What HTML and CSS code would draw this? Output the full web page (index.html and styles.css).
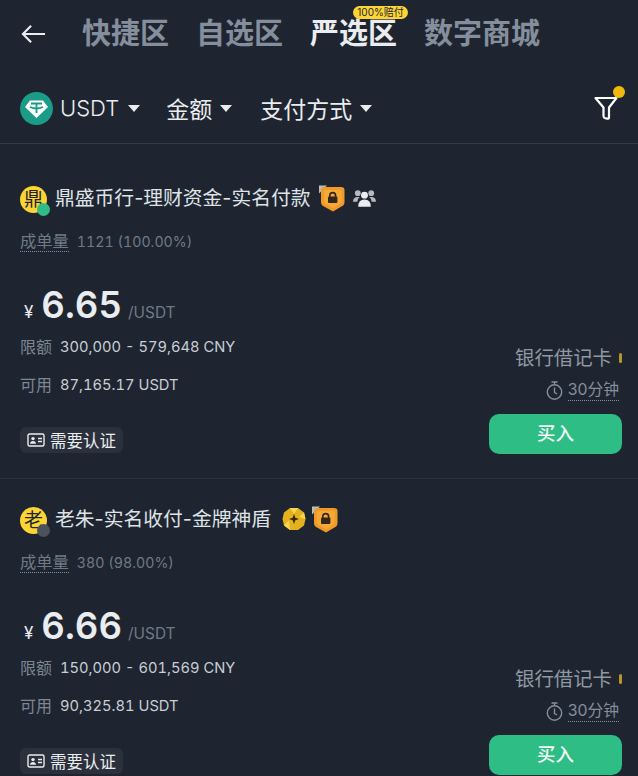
FILE: index.html
```html
<!DOCTYPE html>
<html lang="zh">
<head>
    <meta charset="UTF-8">
    <meta name="viewport" content="width=device-width, initial-scale=1.0">
    <title>严选区</title>
    <link rel="stylesheet" href="styles.css">
</head>
<body>
    <!-- Shared icons -->
    <svg class="icon-defs" aria-hidden="true">
        <symbol id="shield" viewBox="0 0 26 27">
            <path d="M0 0.5 H8 L0 8.5 Z" fill="#b9bdc3"/>
            <path d="M2 5 Q2 2 5 2 L22 2 Q25.5 2 25.5 5 L25.5 17 Q25.5 20 22.5 21.5 L14 26.5 L5 21.5 Q2 20 2 17 Z" fill="#f09a28"/>
            <path d="M5 6 Q5 5 6 5 L21.5 5 Q22.5 5 22.5 6 L22.5 16.5 Q22.5 18 21 19 L14 23 L7 19 Q5 18 5 16.5 Z" fill="#f7a938"/>
            <path d="M10.8 12 V10.5 a2.9 2.9 0 0 1 5.8 0 V12" fill="none" stroke="#33261a" stroke-width="1.6"/>
            <rect x="9" y="11.5" width="9.4" height="6.5" rx="1" fill="#33261a"/>
        </symbol>
        <symbol id="id-card" viewBox="0 0 18 14">
            <rect x="1" y="1" width="16" height="12" rx="1.5" fill="none" stroke="#eaecef" stroke-width="1.4"/>
            <circle cx="6" cy="5.6" r="1.7" fill="#eaecef"/>
            <path d="M3 10.8 Q3.4 8 6 8 Q8.6 8 9 10.8 Z" fill="#eaecef"/>
            <path d="M11 5.5 H15 M11 8.5 H15" stroke="#eaecef" stroke-width="1.3"/>
        </symbol>
        <symbol id="clock" viewBox="0 0 17 19">
            <path d="M5.5 1 H11.5 M8.5 1 V3.5" stroke="#848e9c" stroke-width="1.4" fill="none"/>
            <circle cx="8.5" cy="11" r="7.2" stroke="#848e9c" stroke-width="1.4" fill="none"/>
            <path d="M8.5 6.5 V11.5 L11.2 13" stroke="#848e9c" stroke-width="1.4" fill="none"/>
        </symbol>
    </svg>

    <header class="tabs">
        <svg class="back-icon" viewBox="0 0 26 20" aria-hidden="true">
            <path d="M25 10 H2 M10.5 1.5 L2 10 L10.5 18.5" fill="none" stroke="#eaecef" stroke-width="2.2"/>
        </svg>
        <nav class="tab-list">
            <span class="tab">快捷区</span>
            <span class="tab">自选区</span>
            <span class="tab tab-active">严选区<em class="tab-badge">100%赔付</em></span>
            <span class="tab">数字商城</span>
        </nav>
    </header>

    <section class="filters">
        <svg class="coin-icon" viewBox="0 0 33 33" aria-hidden="true">
            <circle cx="16.5" cy="16.5" r="16.5" fill="#1a9c88"/>
            <path d="M10 8.5 H23 L28 15 L16.5 26 L5 15 Z" fill="#fff"/>
            <path d="M11 11.5 H22 M16.5 11.5 V21 M10 15 Q16.5 18 23 15" fill="none" stroke="#1a9c88" stroke-width="1.8"/>
        </svg>
        <span class="filter-item filter-coin">USDT<i class="caret"></i></span>
        <span class="filter-item">金额<i class="caret"></i></span>
        <span class="filter-item">支付方式<i class="caret"></i></span>
        <span class="filter-btn">
            <svg viewBox="0 0 24 24" aria-hidden="true">
                <path d="M1.5 2 H22.5 L15 11.5 V21.5 Q15 23 13 22.6 L10.8 22 Q9.5 21.6 9.5 20 V11.5 Z" fill="none" stroke="#fff" stroke-width="2.2" stroke-linejoin="round"/>
            </svg>
            <i class="filter-dot"></i>
        </span>
    </section>

    <main class="ad-list">
        <article class="ad">
            <div class="ad-title">
                <span class="avatar">鼎<i class="status status-on"></i></span>
                <span class="ad-name">鼎盛币行-理财资金-实名付款</span>
                <svg class="badge-icon" aria-hidden="true"><use href="#shield"/></svg>
                <svg class="group-icon" viewBox="0 0 24 20" aria-hidden="true">
                    <circle cx="5" cy="5" r="3" fill="#b4b9c0"/>
                    <circle cx="19" cy="5" r="3" fill="#b4b9c0"/>
                    <path d="M0 14 Q0 9 5 9 L7 9 Q4.5 11 4.5 14 Z M24 14 Q24 9 19 9 L17 9 Q19.5 11 19.5 14 Z" fill="#b4b9c0"/>
                    <circle cx="12" cy="7" r="3.6" fill="#eaecef"/>
                    <path d="M5.5 19 Q5.5 11.5 12 11.5 Q18.5 11.5 18.5 19 Z" fill="#eaecef"/>
                </svg>
            </div>
            <div class="ad-stats"><span class="dotted">成单量</span><span class="stats-value">1121 (100.00%)</span></div>
            <div class="ad-body">
                <div class="ad-left">
                    <div class="price"><span class="price-unit">¥</span><strong class="price-value">6.65</strong><span class="price-per">/USDT</span></div>
                    <div class="info-row"><span class="info-label">限额</span><span class="info-value">300,000 - 579,648 CNY</span></div>
                    <div class="info-row info-row-second"><span class="info-label">可用</span><span class="info-value">87,165.17 USDT</span></div>
                    <span class="tag"><svg aria-hidden="true"><use href="#id-card"/></svg>需要认证</span>
                </div>
                <div class="ad-right">
                    <div class="pay-method">银行借记卡<i class="pay-mark"></i></div>
                    <div class="pay-time"><svg aria-hidden="true"><use href="#clock"/></svg><span class="dotted">30分钟</span></div>
                    <button class="buy-btn" type="button">买入</button>
                </div>
            </div>
        </article>

        <article class="ad">
            <div class="ad-title">
                <span class="avatar">老<i class="status status-off"></i></span>
                <span class="ad-name">老朱-实名收付-金牌神盾</span>
                <svg class="medal-icon" viewBox="0 0 24 24" aria-hidden="true">
                    <path d="M8 1 L16 1 L22 5.5 L23.5 12 L22 18.5 L16 23 L8 23 L2 18.5 L0.5 12 L2 5.5 Z" fill="#e3b21c"/>
                    <path d="M8 1 L16 1 L12 7 Z M2 18.5 L7 13 L8 23 Z M22 5.5 L23.5 12 L17 10 Z" fill="#f5d555"/>
                    <path d="M12 7 L13.3 10.7 L17 12 L13.3 13.3 L12 17 L10.7 13.3 L7 12 L10.7 10.7 Z" fill="#33290c"/>
                </svg>
                <svg class="badge-icon" aria-hidden="true"><use href="#shield"/></svg>
            </div>
            <div class="ad-stats"><span class="dotted">成单量</span><span class="stats-value">380 (98.00%)</span></div>
            <div class="ad-body">
                <div class="ad-left">
                    <div class="price"><span class="price-unit">¥</span><strong class="price-value">6.66</strong><span class="price-per">/USDT</span></div>
                    <div class="info-row"><span class="info-label">限额</span><span class="info-value">150,000 - 601,569 CNY</span></div>
                    <div class="info-row info-row-second"><span class="info-label">可用</span><span class="info-value">90,325.81 USDT</span></div>
                    <span class="tag"><svg aria-hidden="true"><use href="#id-card"/></svg>需要认证</span>
                </div>
                <div class="ad-right">
                    <div class="pay-method">银行借记卡<i class="pay-mark"></i></div>
                    <div class="pay-time"><svg aria-hidden="true"><use href="#clock"/></svg><span class="dotted">30分钟</span></div>
                    <button class="buy-btn" type="button">买入</button>
                </div>
            </div>
        </article>
    </main>
</body>
</html>
```
FILE: styles.css
```css
/* Page base */
html, body {
    height: 776px;
    overflow: hidden;
}

body {
    margin: 0;
    background-color: #1e2530;
    color: #eaecef;
    font-family: Inter, "Noto Sans CJK SC", sans-serif;
}

.icon-defs {
    display: none;
}

i, em {
    font-style: normal;
}

/* Top tabs */
.tabs {
    display: flex;
    align-items: center;
    height: 68px;
    padding-left: 21px;
    padding-bottom: 2px;
}

.back-icon {
    width: 25px;
    height: 20px;
}

.tab-list {
    display: flex;
    gap: 27px;
    margin-left: 36px;
}

.tab {
    position: relative;
    color: #848e9c;
    font-size: 29px;
    font-weight: 600;
    line-height: 28px;
}

.tab-active {
    color: #eaecef;
}

.tab-badge {
    position: absolute;
    top: -14px;
    left: 43px;
    width: 55px;
    height: 13px;
    border-radius: 7px;
    background-color: #fcd535;
    color: #1e2530;
    font-size: 10px;
    font-weight: 400;
    line-height: 13px;
    text-align: center;
    white-space: nowrap;
}

/* Filter bar */
.filters {
    display: flex;
    align-items: center;
    height: 70px;
    padding: 3px 20px 0;
    border-bottom: 1px solid #343b46;
}

.coin-icon {
    width: 33px;
    height: 33px;
    margin-right: 7px;
}

.filter-item {
    display: flex;
    align-items: center;
    margin-right: 28px;
    color: #eaecef;
    font-size: 23px;
}

.filter-coin {
    margin-right: 26px;
    font-size: 22px;
    font-weight: 300;
}

.caret {
    width: 0;
    height: 0;
    margin-left: 8px;
    border-top: 7px solid #eaecef;
    border-left: 6px solid transparent;
    border-right: 6px solid transparent;
}

.filter-coin .caret {
    margin-left: 9px;
}

.filter-btn {
    position: relative;
    width: 24px;
    height: 24px;
    margin-left: auto;
}

.filter-btn svg {
    display: block;
    width: 24px;
    height: 24px;
}

.filter-dot {
    position: absolute;
    top: -10px;
    right: -7px;
    width: 12px;
    height: 12px;
    border-radius: 50%;
    background-color: #f0b90b;
}

/* Ad list */
.ad-list {
    padding-top: 13px;
}

.ad {
    padding: 26px 16px 24px 20px;
    border-bottom: 1px solid #2c333e;
}

.ad + .ad {
    padding-top: 25px;
}

.ad-title {
    display: flex;
    align-items: center;
    height: 30px;
}

.avatar {
    position: relative;
    flex: none;
    width: 27px;
    height: 27px;
    margin-top: 2px;
    border-radius: 50%;
    background-color: #fcd535;
    color: #1e2530;
    font-size: 19px;
    line-height: 27px;
    text-align: center;
}

.status {
    position: absolute;
    right: -3px;
    bottom: -3px;
    width: 13px;
    height: 13px;
    border-radius: 50%;
}

.status-on {
    background-color: #2ebd85;
}

.status-off {
    background-color: #4c525c;
}

.ad-name {
    margin-left: 8px;
    font-size: 19.8px;
    line-height: 30px;
    color: #dfe2e6;
}

.badge-icon {
    width: 26px;
    height: 27px;
    margin-left: 8px;
}

.group-icon {
    width: 23px;
    height: 20px;
    margin-left: 8px;
}

.medal-icon {
    width: 24px;
    height: 24px;
    margin-left: 11px;
}

.medal-icon + .badge-icon {
    margin-left: 6px;
}

.ad-stats {
    display: flex;
    align-items: center;
    gap: 8px;
    height: 20px;
    margin-top: 18px;
    color: #6f7a87;
    font-size: 16.3px;
}

.stats-value {
    font-size: 14.2px;
    font-variant-numeric: tabular-nums;
}

.dotted {
    border-bottom: 1px dotted #848e9c;
    line-height: 20px;
}

/* Price and limits */
.ad-body {
    display: flex;
    justify-content: space-between;
    align-items: flex-end;
    margin-top: 35px;
}

.ad-left {
    padding-bottom: 1px;
}

.price {
    display: flex;
    align-items: baseline;
    height: 40px;
    line-height: 38px;
}

.price-unit {
    margin-left: 4px;
    font-size: 17px;
}

.price-value {
    margin-left: 8px;
    font-size: 36.5px;
    font-weight: 600;
    font-variant-numeric: tabular-nums;
}

.price-per {
    margin-left: 6px;
    color: #6f7a87;
    font-size: 15.4px;
}

.info-row {
    display: flex;
    align-items: center;
    gap: 8px;
    height: 20px;
    margin-top: 11px;
}

.info-row-second {
    margin-top: 18px;
}

.info-label {
    color: #7d8794;
    font-size: 16px;
    line-height: 18px;
}

.info-value {
    color: #c9ced5;
    font-size: 14.7px;
    font-variant-numeric: tabular-nums;
}

.tag {
    display: inline-flex;
    align-items: center;
    gap: 5px;
    height: 26px;
    margin-top: 32px;
    padding: 0 7px;
    border-radius: 6px;
    background-color: #2a313c;
    color: #eaecef;
    font-size: 16.5px;
    vertical-align: top;
}

.tag svg {
    width: 18px;
    height: 14px;
}

/* Payment and buy button */
.ad-right {
    display: flex;
    flex-direction: column;
    align-items: flex-end;
    width: 133px;
}

.pay-method {
    display: flex;
    align-items: center;
    color: #8f98a3;
    font-size: 19.4px;
    line-height: 26px;
    white-space: nowrap;
}

.pay-mark {
    width: 3px;
    height: 10px;
    margin-left: 7px;
    border-radius: 2px;
    background-color: #b8962a;
}

.pay-time {
    display: flex;
    align-items: center;
    gap: 5px;
    margin-top: 9px;
    margin-right: 3px;
    color: #848e9c;
    font-size: 15.8px;
}

.pay-time svg {
    width: 17px;
    height: 19px;
}

.buy-btn {
    width: 133px;
    height: 40px;
    margin-top: 13px;
    padding: 0 0 5px;
    border: none;
    border-radius: 10px;
    background-color: #2ebd85;
    color: #f2fbf7;
    font-family: inherit;
    font-size: 18.5px;
    font-weight: 500;
}
```
